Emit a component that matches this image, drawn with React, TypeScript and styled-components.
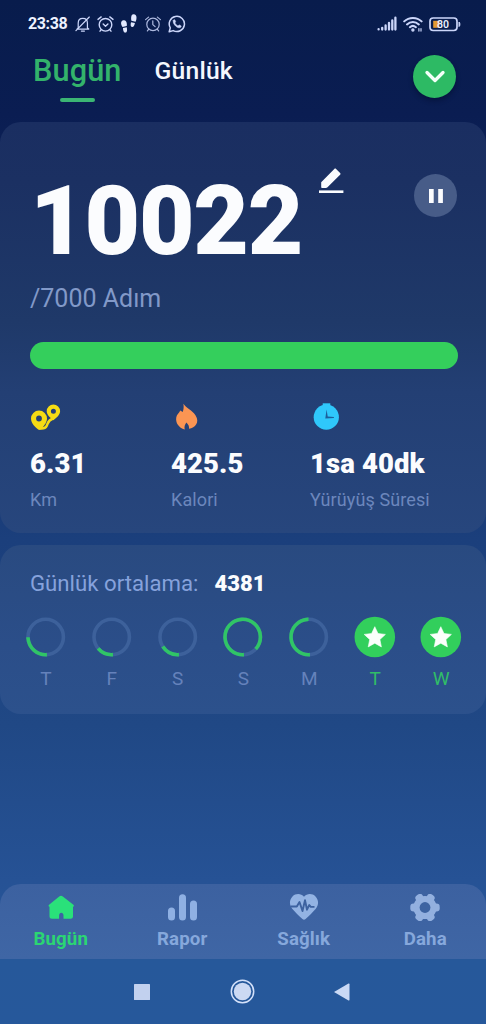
import React from "react";
import styled, { createGlobalStyle } from "styled-components";

const GlobalStyle = createGlobalStyle`
  * { box-sizing: border-box; }
  body { margin: 0; background: #26579a; }
`;

const Screen = styled.div`
  width: 100%;
  max-width: 486px;
  height: 1024px;
  display: flex;
  flex-direction: column;
  overflow: hidden;
  font-family: Roboto, "Noto Sans", sans-serif;
  color: #fbfcfe;
  background: linear-gradient(180deg, #081c4c 0, #0a1d52 115px, #1b3f7c 540px, #204885 725px, #265295 880px, #26589a 960px, #26589b 1024px);
`;

const StatusBar = styled.header`
  height: 47px;
  padding: 0 25px 0 28px;
  display: flex;
  align-items: center;
  justify-content: space-between;
  color: #ccd6fa;
`;

const StatusGroup = styled.div<{ $gap: number }>`
  display: flex;
  align-items: center;
  gap: ${(p) => p.$gap}px;
  svg { display: block; }
`;

const Clock = styled.span`
  width: 41px;
  font-size: 16px;
  font-weight: 700;
  letter-spacing: -0.4px;
  color: #eef2ff;
  white-space: nowrap;
`;

const Header = styled.div`
  height: 75px;
  padding: 6px 30px 0 33px;
  display: flex;
  align-items: flex-start;
  justify-content: space-between;
`;

const Tabs = styled.nav`
  display: flex;
  gap: 33px;
`;

const Tab = styled.div<{ $active?: boolean }>`
  display: flex;
  flex-direction: column;
  align-items: center;
  font-size: ${(p) => (p.$active ? 30.7 : 24.7)}px;
  font-weight: 500;
  line-height: 36px;
  letter-spacing: ${(p) => (p.$active ? 0.1 : 0.2)}px;
  color: ${(p) => (p.$active ? "#33b36b" : "#f4f7fe")};
`;

const Underline = styled.span`
  width: 35px;
  height: 4px;
  margin-top: 8.5px;
  border-radius: 2px;
  background: #3bb574;
`;

const RoundButton = styled.button<{ $fill: string; $shadow?: boolean; $top: number }>`
  width: 43px;
  height: 43px;
  margin-top: ${(p) => p.$top}px;
  padding: 0;
  border: 0;
  border-radius: 50%;
  display: grid;
  place-items: center;
  background: ${(p) => p.$fill};
  box-shadow: ${(p) => (p.$shadow ? "0 3px 5px rgba(3, 12, 40, 0.45)" : "none")};
`;

const StepsCard = styled.section`
  height: 411px;
  padding: 51px 29px 0 30px;
  border-radius: 21px;
  background: linear-gradient(180deg, #1a2e61 0, #1b3062 60px, #1f3969 200px, #233f74 270px, #27467d 100%);
`;

const CountRow = styled.div`
  height: 96px;
  display: flex;
  align-items: flex-start;
`;

const Count = styled.div`
  width: 272px;
  font-size: 96px;
  line-height: 97px;
  font-weight: 900;
  letter-spacing: -1.2px;
`;

const EditIcon = styled.svg`
  width: 26px;
  height: 28px;
  margin: -6px 0 0 16px;
`;

const Spacer = styled.div`
  flex: 1;
`;

const Goal = styled.div`
  margin-top: 15px;
  font-size: 25px;
  line-height: 30px;
  color: #8299c8;
`;

const Progress = styled.div`
  height: 27px;
  margin: 28px -1px 0 0;
  border-radius: 14px;
  background: #34cf5c;
`;

const Stats = styled.div`
  margin-top: 34px;
  display: grid;
  grid-template-columns: 141px 139px 1fr;
`;

const Stat = styled.div`
  svg { display: block; height: 29px; }
`;

const StatValue = styled.div`
  margin-top: 16px;
  font-size: 27.5px;
  line-height: 32px;
  font-weight: 900;
  letter-spacing: 0.1px;
  white-space: nowrap;
`;

const StatLabel = styled.div`
  margin-top: 9px;
  font-size: 18px;
  line-height: 22px;
  letter-spacing: 0.1px;
  color: #6c87bd;
  white-space: nowrap;
`;

const AverageCard = styled.section`
  height: 169px;
  margin-top: 12px;
  padding: 24px 12px 0 13px;
  border-radius: 21px;
  background: linear-gradient(180deg, #294a80, #2b4e89 60%, #2c518c);
`;

const Average = styled.div`
  padding-left: 17px;
  display: flex;
  gap: 16px;
  font-size: 22.2px;
  line-height: 28px;
  color: #86a2dc;
  strong { padding-top: 1px; font-weight: 900; font-size: 22px; color: #fbfcfe; }
`;

const Week = styled.div`
  margin-top: 18px;
  display: grid;
  grid-template-columns: repeat(7, 1fr);
`;

const Day = styled.div<{ $done: boolean }>`
  display: flex;
  flex-direction: column;
  align-items: center;
  gap: 9px;
  font-size: 19px;
  line-height: 24px;
  color: ${(p) => (p.$done ? "#31bd68" : "#6582bb")};
`;

const BottomNav = styled.nav`
  height: 75px;
  margin-top: auto;
  padding-top: 10px;
  display: grid;
  grid-template-columns: repeat(4, 1fr);
  border-radius: 21px 21px 0 0;
  background: linear-gradient(180deg, #3c61a0, #3f66a5);
`;

const NavItem = styled.div<{ $active?: boolean }>`
  display: flex;
  flex-direction: column;
  align-items: center;
  gap: 7px;
  font-size: 18.7px;
  line-height: 22px;
  font-weight: 700;
  letter-spacing: 0.1px;
  color: ${(p) => (p.$active ? "#2bd673" : "#86a8dc")};
  svg { display: block; }
`;

const SystemNav = styled.footer`
  height: 65px;
  padding: 0 136px 0 134px;
  display: flex;
  align-items: center;
  justify-content: space-between;
`;

const stroke = { fill: "none", stroke: "currentColor", strokeLinecap: "round", strokeLinejoin: "round" } as const;

const StatusIcons = () => (
  <StatusGroup $gap={6}>
    <Clock>23:38</Clock>
    <svg width="16" height="18" viewBox="0 0 17 18" {...stroke} strokeWidth="1.3">
      <path d="M3.4 13.2V8.2C3.4 4.9 5.2 3.1 8.3 3.1s4.9 1.8 4.9 5v5.1l1.4 1.2H2.1zM1 16 15.2 1.6M6.8 16.5h3.2" />
    </svg>
    <svg width="17" height="18" viewBox="0 0 17 18" {...stroke} strokeWidth="1.4">
      <circle cx="8.5" cy="9.8" r="6.3" />
      <path d="M1 4.4 4.2 1.9M16 4.4l-3.2-2.500M4 14.800l-1 1.400M13 14.800l1 1.400M6.200 9 8.500 11.200 10.900 9" />
    </svg>
    <svg width="18" height="20" viewBox="0 0 18 20" fill="#e2e9ff">
      <path d="M3.800 6.400c2.400-.3 3.500 2.200 3 5.200l-3.900.9C.7 9.600 1.300 6.800 3.800 6.400zM3.300 13.600l3.500-.7c.6 2.900.3 4.600-1.200 4.900S3.300 16 3.300 13.600zM13.300.7c2.600.2 3.300 3 1.700 7l-3.900-.8C10.400 3.300 11.100.5 13.300.7zM10.800 8.200l3.600.8c-.6 2.600-1.400 3.900-2.700 3.600s-1.600-2-.9-4.400z" transform="translate(-.6 -.6) scale(1.080)" />
    </svg>
    <svg width="18" height="18" viewBox="0 0 18 18" {...stroke} strokeWidth="1.2" opacity=".85">
      <circle cx="9" cy="9.4" r="6.2" />
      <path d="M1.600 4.600 4.600 2.100M16.400 4.600l-3-2.500M4.600 14.300l-1.200 1.600M13.400 14.300l1.200 1.600M8.800 5.800v3.800l2.300 2" />
    </svg>
    <svg width="18" height="18" viewBox="0 0 18 18" {...stroke} strokeWidth="1.5">
      <path d="M1.200 16.800 2.300 12.800A7.600 7.600 0 1 1 5.200 15.600z" />
      <path fill="currentColor" strokeWidth=".4" d="M5.200 5.500c.7-1.300 1.500-1.100 1.900-.2l.6 1.300c.2.500-.6 1-.7 1.300.8 1.500 1.800 2.300 3.100 2.900.4-.1.900-1.200 1.400-.9l1.500.8c.5.300.2 1.100-.2 1.500-1.200 1.200-3.300.5-5-1C6 9.700 4.600 7.300 5.200 5.500z" />
    </svg>
  </StatusGroup>
);

const Battery = () => (
  <svg width="32" height="16" viewBox="0 0 32 16">
    <rect x="1" y="2" width="27" height="12.5" rx="3.2" fill="none" stroke="#ccd6fa" strokeWidth="1.7" />
    <rect x="4.200" y="4.800" width="6" height="7" fill="#e49a32" />
    <path d="M30 6c1.200.4 1.200 4 0 4.500z" fill="#ccd6fa" stroke="#ccd6fa" />
    <text x="14" y="11.900" textAnchor="middle" fontSize="10.500" fontWeight="600" fill="#eaf0ff">80</text>
  </svg>
);

const SignalIcons = () => (
  <StatusGroup $gap={6}>
    <svg width="20" height="15" viewBox="0 0 20 15" {...stroke} strokeWidth="2.300">
      <path d="M1.600 13.200v.2M5.200 11.800v1.700M8.600 9.400v4.100M12 6.900v6.600M15.300 4.400v9.100M18.400 1.700v11.800" />
    </svg>
    <svg width="20" height="16" viewBox="0 0 20 16" {...stroke} strokeWidth="2">
      <path d="M1.200 5.400c4.800-4.700 12.600-4.700 17.400 0M4 8.400c3.400-3.200 8.400-3.200 11.800 0M6.900 11.200c1.900-1.700 4.100-1.700 6 0" />
      <circle cx="9.900" cy="14" r=".7" fill="currentColor" />
      <path strokeWidth="1.200" d="M15.900 12.500v2.600M18 12.500v2.600" />
    </svg>
    <Battery />
  </StatusGroup>
);

const RouteIcon = () => (
  <svg width="31" height="29" viewBox="0 0 31 29">
    <path d="M10 25.400c3.500.4 5.500-.2 6.600-2.400 1.600-3.200 1.200-6 6.400-7.600" fill="none" stroke="#f5dc14" strokeWidth="2.600" />
    <path
      fillRule="evenodd"
      fill="#f5dc14"
      d="M9 7.600a8 8 0 0 1 8 8c0 4.700-4 8.600-6.600 11-.7.600-1.500.6-2.200 0C5.300 24.400 1 20.300 1 15.600a8 8 0 0 1 8-8zm0 5a2.900 2.900 0 1 0 0 5.800 2.900 2.900 0 0 0 0-5.800zM23.400 1.600a6.700 6.700 0 0 1 6.700 6.700c0 3.600-3.600 6.600-6.700 9-3.100-2.400-6.700-5.400-6.700-9a6.700 6.700 0 0 1 6.700-6.700zm0 4.200a2.500 2.500 0 1 0 0 5 2.500 2.500 0 0 0 0-5z"
    />
  </svg>
);

const FlameIcon = () => (
  <svg width="30" height="29" viewBox="0 0 30 29">
    <path fill="#fb9553" d="M12.400.8c2.900 4.500 8.700 6.200 12.200 11.700 4.300 6.900-.3 12.300-6.600 13.300.4-2.700-.8-4.400-2.600-6.300-1.400 1.900-2.300 3.600-1.700 6.900C7.700 24.700 4.300 19.900 5.300 14.200c.6-3 2.800-4.400 4-6.800l2.400 1.600c1-2.500 1.200-5.100.7-8.200z" />
  </svg>
);

const TimerIcon = () => (
  <svg width="32" height="29" viewBox="0 0 32 29">
    <path fill="#2fc8fb" d="M12.700.3h7.600v3h-7.600z" />
    <circle cx="16.300" cy="14.200" r="12.600" fill="#2fc8fb" />
    <path fill="#1d5f9b" d="m16.600 6.500 1.100 6.900 6.200.7v1l-8.600.5z" />
  </svg>
);

const days = [
  { label: "T", value: 0.26 },
  { label: "F", value: 0.15 },
  { label: "S", value: 0.17 },
  { label: "S", value: 0.88 },
  { label: "M", value: 0.51 },
  { label: "T", value: 1 },
  { label: "W", value: 1 },
];

const DayRing = ({ value }: { value: number }) =>
  value >= 1 ? (
    <svg width="42" height="42" viewBox="0 0 42 42">
      <circle cx="20.800" cy="21" r="20.300" fill="#32cf5c" />
      <path fill="#fafffb" strokeLinejoin="round" stroke="#fafffb" strokeWidth=".6" d="m20.800 10.700 3.200 6.800 7.400.9-5.500 5.100 1.500 7.400-6.600-3.700-6.600 3.700 1.500-7.400-5.500-5.100 7.400-.9z" />
    </svg>
  ) : (
    <svg width="42" height="42" viewBox="0 0 42 42" fill="none" strokeWidth="3.600">
      <circle cx="20.700" cy="21" r="17.700" stroke="#3d619b" />
      <circle
        cx="20.700"
        cy="21"
        r="17.700"
        stroke="#30c566"
        pathLength={100}
        strokeDasharray={`${value * 100} 100`}
        transform="rotate(86 20.700 21)"
      />
    </svg>
  );

const HomeIcon = () => (
  <svg width="28" height="27" viewBox="0 0 28 27">
    <path fill="#2ae17a" d="M12.200 2.500c1.200-1 2.400-1 3.600 0l10.600 8.200c1 .9.600 2-.4 2v9.600c0 1.700-.9 2.500-2.500 2.500h-7v-3.300c0-3.600-4.400-3.600-4.400 0v3.300H5c-1.600 0-2.500-.8-2.500-2.500v-9.600c-1 0-1.400-1.100-.4-2z" />
  </svg>
);

const ReportIcon = () => (
  <svg width="31" height="27" viewBox="0 0 31 27" fill="#8fb0e3">
    <rect x="1" y="13.500" width="7" height="13" rx="3.500" />
    <rect x="12" y=".3" width="7" height="26.200" rx="3.500" />
    <rect x="23" y="6.500" width="7" height="20" rx="3.500" />
  </svg>
);

const HeartIcon = () => (
  <svg width="30" height="27" viewBox="0 0 30 27">
    <path fill="#93b3e3" d="M15 2.700c3-3.500 8.500-3.300 11.500-.3 3.500 3.600 3.200 8.800.3 12.400-3 3.600-6.500 6.700-10.200 10.300-1.100 1-2.100 1-3.200 0C9.700 21.500 6.200 18.400 3.200 14.800.3 11.200 0 6 3.500 2.400c3-3 8.500-3.200 11.500.3z" />
    <path fill="none" stroke="#3d62a0" strokeWidth="1.900" strokeLinejoin="round" d="M1.500 12.500h6.300l2.700-4.500 3 9L16 6.200l2 9.500 2.300-4.700 1.500 1.900h3.700" />
  </svg>
);

const GearIcon = () => (
  <svg width="30" height="27" viewBox="0 0 30 27" fill="#93b0df">
    <circle cx="15" cy="13.500" r="11.600" />
    {[0, 60, 120].map((angle) => (
      <rect key={angle} x=".3" y="9.500" width="29.400" height="8" rx="3.200" transform={`rotate(${angle} 15 13.500)`} />
    ))}
    <circle cx="15" cy="13.500" r="5.400" fill="#3d63a1" />
  </svg>
);

export default function App() {
  return (
    <Screen>
      <GlobalStyle />
      <StatusBar>
        <StatusIcons />
        <SignalIcons />
      </StatusBar>

      <Header>
        <Tabs>
          <Tab $active>
            Bugün
            <Underline />
          </Tab>
          <Tab>Günlük</Tab>
        </Tabs>
        <RoundButton $fill="#2dba64" $shadow $top={1.500}>
          <svg width="22" height="14" viewBox="0 0 22 14" {...stroke} strokeWidth="3.300" stroke="#f3fff8">
            <path d="m3 3.500 8 8 8-8" />
          </svg>
        </RoundButton>
      </Header>

      <StepsCard>
        <CountRow>
          <Count>10022</Count>
          <EditIcon viewBox="0 0 26 28">
            <path fill="#fbfcfe" d="M3.200 15.200 16.300 2c.6-.6 1.200-.6 1.800 0l4 4c.6.600.6 1.200 0 1.800L9.500 20.200c-.5.500-1 .8-1.700.8H4c-.5 0-.8-.3-.8-.8z" />
            <path fill="#fbfcfe" d="M1 23.400h24.400v2.600H1z" />
          </EditIcon>
          <Spacer />
          <RoundButton $fill="#475c88" $top={1}>
            <svg width="16" height="14" viewBox="0 0 16 14" fill="#fbfcfe">
              <path d="M1 0h4.700v14H1zM10.200 0h4.700v14h-4.700z" />
            </svg>
          </RoundButton>
        </CountRow>
        <Goal>/7000 Adım</Goal>
        <Progress />
        <Stats>
          <Stat>
            <RouteIcon />
            <StatValue>6.31</StatValue>
            <StatLabel>Km</StatLabel>
          </Stat>
          <Stat>
            <FlameIcon />
            <StatValue>425.5</StatValue>
            <StatLabel>Kalori</StatLabel>
          </Stat>
          <Stat>
            <TimerIcon />
            <StatValue>1sa 40dk</StatValue>
            <StatLabel>Yürüyüş Süresi</StatLabel>
          </Stat>
        </Stats>
      </StepsCard>

      <AverageCard>
        <Average>
          <span>Günlük ortalama:</span>
          <strong>4381</strong>
        </Average>
        <Week>
          {days.map((day, i) => (
            <Day key={i} $done={day.value >= 1}>
              <DayRing value={day.value} />
              {day.label}
            </Day>
          ))}
        </Week>
      </AverageCard>

      <BottomNav>
        <NavItem $active>
          <HomeIcon />
          Bugün
        </NavItem>
        <NavItem>
          <ReportIcon />
          Rapor
        </NavItem>
        <NavItem>
          <HeartIcon />
          Sağlık
        </NavItem>
        <NavItem>
          <GearIcon />
          Daha
        </NavItem>
      </BottomNav>

      <SystemNav>
        <svg width="16" height="16" viewBox="0 0 16 16">
          <rect width="16" height="16" rx=".5" fill="#c2d1ef" />
        </svg>
        <svg width="25" height="25" viewBox="0 0 25 25">
          <circle cx="12.500" cy="12.500" r="11.200" fill="none" stroke="#d4e1fa" strokeWidth="1.500" />
          <circle cx="12.500" cy="12.500" r="8.700" fill="#ccd9f3" />
        </svg>
        <svg width="16" height="18" viewBox="0 0 16 18">
          <path d="M0 9 14.500.6c.6-.3 1 0 1 .6v15.600c0 .6-.4.9-1 .6z" fill="#cad9f5" />
        </svg>
      </SystemNav>
    </Screen>
  );
}
